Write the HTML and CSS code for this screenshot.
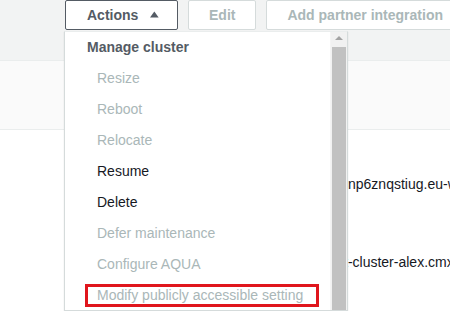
FILE: index.html
```html
<!DOCTYPE html>
<html>
<head>
<meta charset="utf-8">
<title>Cluster actions</title>
<link rel="stylesheet" href="styles.css">
</head>
<body>
<div class="page">
  <div class="toolbar">
    <button class="btn btn-main">Actions
      <svg class="caret" width="10" height="7" viewBox="0 0 10 7"><polygon points="5,0 10,7 0,7" fill="#545b64"/></svg>
    </button>
    <button class="btn btn-off">Edit</button>
    <button class="btn btn-off">Add partner integration</button>
  </div>
  <div class="band"></div>
  <div class="rows">
    <div class="cell cell-first">cnp6znqstiug.eu-west-1.redshift.amazonaws.com</div>
    <div class="cell cell-second">t-cluster-alex.cmx0dnp6zn.eu-west-1.redshift.amazonaws.com</div>
  </div>

  <div class="menu">
    <ul class="menu-list">
      <li class="menu-head">Manage cluster</li>
      <li class="off">Resize</li>
      <li class="off">Reboot</li>
      <li class="off">Relocate</li>
      <li>Resume</li>
      <li>Delete</li>
      <li class="off">Defer maintenance</li>
      <li class="off">Configure AQUA</li>
      <li class="off mark"><span>Modify publicly accessible setting</span></li>
    </ul>
    <div class="scroll">
      <div class="scroll-up"></div>
      <div class="scroll-thumb"></div>
    </div>
  </div>
</div>
</body>
</html>
```

FILE: styles.css
```css
*{ padding:0; margin:0; list-style:none; box-sizing:border-box;}
body{ font-family:"Liberation Sans", Arial, sans-serif; font-size:14px; color:#16191f; background:#fff; overflow:hidden;}
.page{ position:relative; width:450px; height:311px; overflow:hidden;}

.toolbar{ height:61px; background:#f2f3f3; border-bottom:1px solid #eaeded; display:flex; align-items:flex-start; gap:10px; padding-left:65px; white-space:nowrap;}
.btn{ height:30px; font:bold 14px "Liberation Sans", Arial, sans-serif; background:#fff; border:1px solid #d5dbdb; border-radius:2px; padding:0 20px; color:#aab7b8; display:flex; align-items:center; flex-shrink:0;}
.btn-main{ border-color:#545b64; color:#545b64; padding:0 18px 0 21px; width:113px;}
.btn-main .caret{ margin-left:12px; margin-top:-1px;}
.btn-off{ cursor:default;}

.band{ height:69px; background:#fafafa; border-bottom:1px solid #eaeded;}

.rows{ padding:44px 0 0 341px; white-space:nowrap;}
.cell{ line-height:20px; height:20px;}
.cell-second{ margin-top:58px; margin-left:3px;}

.menu{ position:absolute; left:64px; top:31px; width:284px; height:280px; background:#fff; border:1px solid #d5dbdb; border-top-color:#eaeded; display:flex; box-shadow:0 1px 1px rgba(0,28,36,.15);}
.menu-list{ flex:1; padding-top:1px;}
.menu-list li{ height:31px; line-height:31px; padding-left:32px; white-space:nowrap;}
.menu-list .menu-head{ height:30px; line-height:29px; padding-left:22px; font-weight:bold; color:#545b64;}
.menu-list .off{ color:#aab7b8;}
.menu-list .mark{ padding:4px 0 0 20px; line-height:normal;}
.menu-list .mark span{ display:block; width:234px; height:23px; line-height:17px; border:3px solid #e0161d; padding-left:9px;}

.scroll{ width:17px; background:#f1f1f1; display:flex; flex-direction:column; border-left:1px solid #f4f4f4;}
.scroll-up{ height:15px; position:relative;}
.scroll-up:after{ content:""; position:absolute; left:4px; top:4px; border-left:4px solid transparent; border-right:4px solid transparent; border-bottom:4px solid #a3a3a3;}
.scroll-thumb{ flex:1; margin:0 1px 0 1px; background:#c1c1c1;}
```
